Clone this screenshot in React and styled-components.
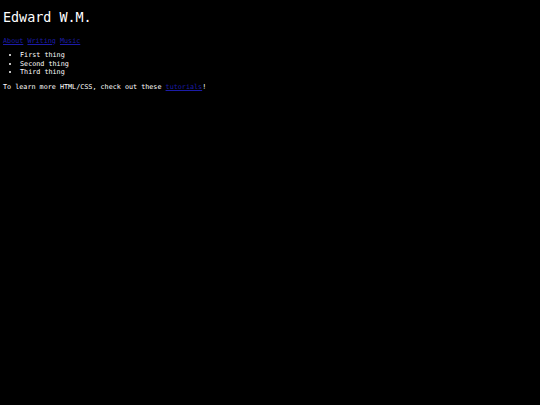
import React from "react"
import { styled, createGlobalStyle } from "styled-components"

const GlobalStyle = createGlobalStyle`
  html, body {
    margin: 0;
    background: #000;
  }
  body {
    font-family: "DejaVu Sans Mono", "Liberation Mono", monospace;
    color: #fff;
  }
`

export default function App() {
  return (
    <>
      <GlobalStyle />
      <Page>
        <Title>Edward W.M.</Title>
        <Nav>
          <a href="#about">About</a> <a href="#writing">Writing</a>{" "}
          <a href="#music">Music</a>
        </Nav>
        <List>
          <li>First thing</li>
          <li>Second thing</li>
          <li>Third thing</li>
        </List>
        <Text>
          To learn more HTML/CSS, check out these <a href="#tutorials">tutorials</a>!
        </Text>
      </Page>
    </>
  )
}

const Page = styled.div`
  padding: 10px 3px 0;
  min-height: 100vh;
  box-sizing: border-box;
  font-size: 6.75px;
  line-height: 8.5px;

  a {
    color: #1c1ca8;
  }
`

const Title = styled.h1`
  margin: 0;
  font-size: 13.4px;
  line-height: 16px;
  font-weight: normal;
`

const Nav = styled.div`
  margin-top: 10.5px;
`

const List = styled.ul`
  margin: 6px 0 0;
  padding-left: 17px;
`

const Text = styled.p`
  margin: 6.5px 0 0;
`
